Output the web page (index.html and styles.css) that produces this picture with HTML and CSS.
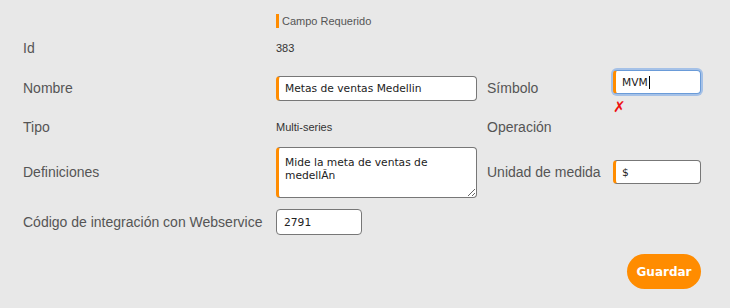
FILE: index.html
```html
<!DOCTYPE html>
<html>
<head>
    <title>Indicador</title>
    <link rel="stylesheet" href="styles.css">
</head>
<body>
    <form class="indicatorForm">
        <div class="formGrid">
            <span></span>
            <span class="requiredNote">Campo Requerido</span>
            <span></span>
            <span></span>

            <label>Id</label>
            <span class="plainValue">383</span>
            <span></span>
            <span></span>

            <label for="nombre">Nombre</label>
            <input type="text" id="nombre" class="field required wide" value="Metas de ventas Medellin">
            <label for="simbolo">Símbolo</label>
            <div class="symbolCell">
                <div class="field required short focused" id="simbolo">MVM<span class="caret"></span></div>
                <span class="fieldError">&#x2717;</span>
            </div>

            <label>Tipo</label>
            <span class="plainValue">Multi-series</span>
            <label>Operación</label>
            <span></span>

            <label for="definiciones">Definiciones</label>
            <textarea id="definiciones" class="field required wide area">Mide la meta de ventas de medellÃn</textarea>
            <label for="unidad">Unidad de medida</label>
            <input type="text" id="unidad" class="field required short" value="$">

            <label for="codigo">Código de integración con Webservice</label>
            <input type="text" id="codigo" class="field code" value="2791">
            <span></span>
            <span></span>
        </div>

        <div class="actions">
            <button type="button">Guardar</button>
        </div>
    </form>
</body>
</html>
```

FILE: styles.css
```css
body {
    font-family: 'Liberation Sans', Arial, sans-serif;
    background-color: #e8e8e8;
    margin: 0;
    padding: 0;
}

.indicatorForm {
    padding: 12px 29px 0 23px;
}

.formGrid {
    display: grid;
    grid-template-columns: 253px 211px 126px 88px;
    grid-template-rows: 18px 36px 44px 34px 56px 44px;
    align-items: center;
}

label {
    color: #555;
    font-size: 14px;
}

.requiredNote {
    font-size: 11px;
    color: #555;
    border-left: 3px solid #ff8c00;
    padding-left: 3px;
    line-height: 14px;
}

.plainValue {
    font-size: 11px;
    color: #333;
}

.field {
    font-family: 'DejaVu Sans', Verdana, sans-serif;
    font-size: 10.7px;
    color: #222;
    background-color: #fff;
    border: 1px solid #777;
    border-radius: 4px;
    box-sizing: border-box;
    height: 25px;
    padding: 0 6px;
    margin: 0;
    outline: none;
}

.field.required {
    border-left: 3px solid #ff8c00;
}

.wide {
    width: 201px;
}

.short {
    width: 88px;
    height: 24px;
}

.code {
    width: 86px;
    height: 26px;
    padding-left: 7px;
}

.area {
    height: 51px;
    padding: 8px 6px 2px;
    resize: both;
    line-height: 13px;
}

.symbolCell {
    align-self: start;
    margin-top: 4px;
}

.focused {
    display: flex;
    align-items: center;
    border-color: #6a9bd8;
    border-left-color: #ff8c00;
    box-shadow: 0 0 0 2px rgba(110, 160, 230, 0.55);
}

.caret {
    display: inline-block;
    width: 1px;
    height: 13px;
    background-color: #000;
    margin-left: 1px;
}

.fieldError {
    display: block;
    color: #ee1111;
    font-family: 'DejaVu Sans', sans-serif;
    font-size: 15px;
    font-weight: bold;
    margin-top: 5px;
    line-height: 16px;
}

.actions {
    display: flex;
    justify-content: flex-end;
    margin-top: 10px;
}

button {
    background-color: #ff8c00;
    color: #fff;
    font-family: 'DejaVu Sans', Verdana, sans-serif;
    font-weight: bold;
    font-size: 12px;
    border: none;
    border-radius: 18px;
    width: 74px;
    height: 35px;
    padding: 0;
    cursor: pointer;
}
```
